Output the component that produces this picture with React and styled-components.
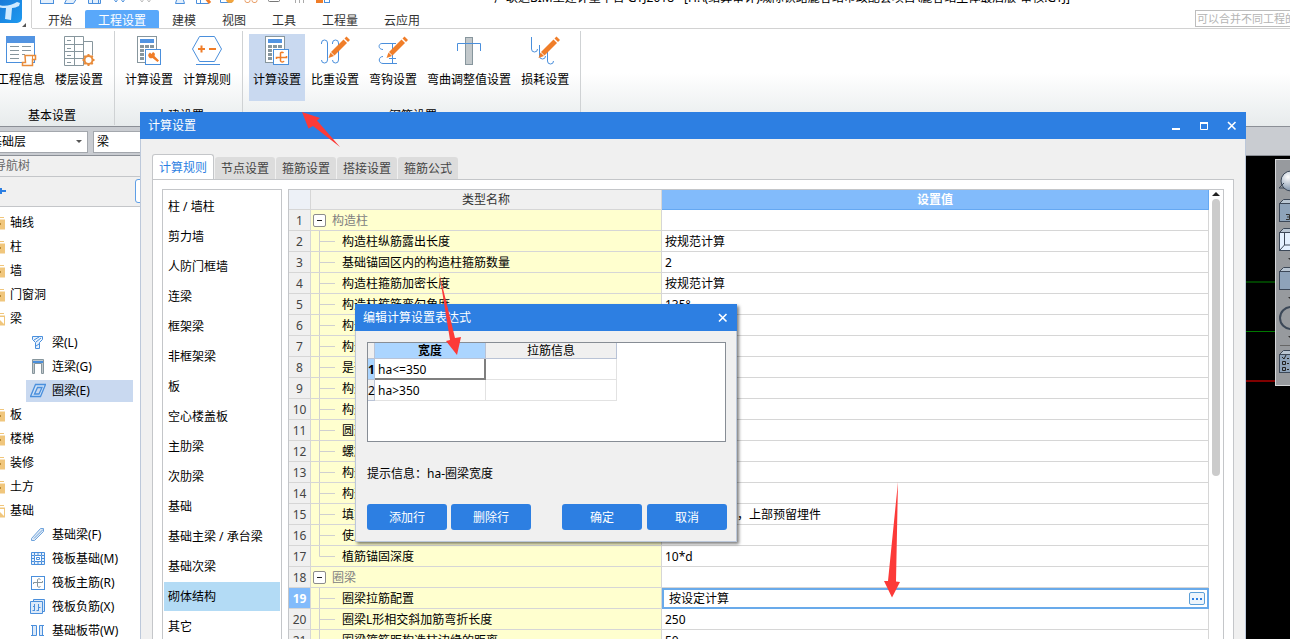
import React from 'react';
import styled, { createGlobalStyle, css } from 'styled-components';

const BLUE = '#2d7fe2';
const LINE = '#c4c6c9';
const ICON_BLUE = '#4a8fdc';
const ORANGE = '#f07d28';
const GRAY = '#87969d';

const GlobalStyle = createGlobalStyle`
  * { box-sizing: border-box; }
  html, body { margin: 0; height: 100%; overflow: hidden; }
  body, button, input, select {
    font-family: "Noto Sans", "Noto Sans CJK SC", sans-serif;
    font-size: 12px;
    line-height: 18px;
    color: #000;
  }
  button { border: 0; padding: 0; background: none; white-space: nowrap; }
  ul { list-style: none; margin: 0; padding: 0; }
  svg { display: block; flex: none; }
  table { border-collapse: separate; border-spacing: 0; table-layout: fixed; }
`;

/* ---------- main window ---------- */

const Desktop = styled.div`
  position: relative;
  height: 100vh;
  overflow: hidden;
  background: #fff;
`;

const Shell = styled.div`
  display: flex;
  flex-direction: column;
  height: calc(100% + 14px);
  margin: -14px 0 0 -16px;
`;

const Header = styled.header`
  display: flex;
`;

const AppMenu = styled.button`
  display: flex;
  align-items: flex-end;
  width: 48px;
  height: 42px;
  border-right: 1px solid #d2d2d2;
`;

const HeaderMain = styled.div`
  flex: 1;
  min-width: 0;
`;

const TitleBar = styled.div`
  display: flex;
  height: 24px;
  padding: 2px 58px 0 8px;
`;

const QuickTools = styled.div`
  display: flex;
  gap: 8px;
`;

const WindowTitle = styled.h1`
  flex: 1;
  margin: 0;
  font-size: 12px;
  font-weight: 400;
  line-height: 20px;
  text-align: center;
  white-space: nowrap;
`;

const MenuRow = styled.nav`
  display: flex;
  height: 19px;
  padding-left: 3px;
  border-bottom: 1px solid #d2d2d2;
`;

const MenuTab = styled.button`
  height: 18px;
  padding: 2px 13px 0;
  color: ${(p) => (p.$active ? '#fff' : '#333')};
  background: ${(p) => (p.$active ? '#59a8fa' : 'transparent')};
  border-radius: 2px 2px 0 0;
`;

const HelpSearch = styled.input`
  width: 120px;
  height: 17px;
  margin: 0 -25px 0 auto;
  padding: 0 1px;
  border: 1px solid #bdbdbd;
  border-radius: 0;
  font-size: 11px;
  &::placeholder { color: #b4b4b4; opacity: 1; }
`;

const Ribbon = styled.div`
  display: flex;
  height: 98px;
  padding: 2px 0 1px 3px;
  background: linear-gradient(#fff 45%, #e7ebec);
  border-bottom: 1px solid #8b8f96;
`;

const RibbonGroup = styled.section`
  display: flex;
  flex-direction: column;
  justify-content: space-between;
  padding: 3px 7px 0 6px;
  border-right: 1px solid #cfd2d4;
`;

const RibbonButtons = styled.div`
  display: flex;
  gap: 2px;
`;

const RibbonButton = styled.button`
  display: flex;
  flex-direction: column;
  align-items: center;
  gap: 4px;
  height: 67px;
  padding: 1px 4px;
  background: ${(p) => (p.$active ? '#c9d9f0' : 'transparent')};
`;

const RibbonLabel = styled.div`
  padding-left: 4px;
  text-align: center;
`;

const ComboBar = styled.div`
  display: flex;
  gap: 5px;
  height: 29px;
  padding: 4px 2px 2px;
  background: #c9ccd1;
  border-bottom: 1px solid #8b8f96;
`;

const ComboBox = styled.div`
  display: flex;
  align-items: center;
  width: 102px;
  height: 22px;
  padding-right: 4px;
  background: #fff;
  border: 1px solid #a3a7ad;
`;

const ComboSelect = styled.select`
  flex: 1;
  height: 20px;
  padding: 0 3px;
  appearance: none;
  border: 0;
  background: none;
`;

const Workspace = styled.div`
  display: flex;
  flex: 1;
  min-height: 0;
  background: #000;
`;

const NavPanel = styled.aside`
  width: 280px;
  background: #fff;
`;

const NavTitle = styled.h2`
  height: 21px;
  margin: 0;
  padding: 0 10px;
  font-size: 12px;
  font-weight: 400;
  line-height: 20px;
  color: #666;
  background: #f0f0f0;
  border-bottom: 1px solid ${LINE};
`;

const NavTools = styled.div`
  display: flex;
  align-items: center;
  justify-content: space-between;
  height: 30px;
  padding: 0 6px 2px 10px;
  background: #f0f0f0;
  border-bottom: 1px solid ${LINE};
`;

const NavSearch = styled.input`
  width: 123px;
  height: 24px;
  border: 1px solid #5f9fe6;
  border-radius: 3px;
`;

const NavList = styled.ul`
  padding-top: 4px;
`;

const FolderRow = styled.button`
  display: flex;
  align-items: center;
  gap: 5px;
  height: 24px;
  padding-left: 7px;
`;

const LeafItem = styled.li`
  padding: 1px 0 1px 42px;
`;

const LeafRow = styled.button`
  display: flex;
  align-items: center;
  gap: 6px;
  width: 107px;
  height: 22px;
  padding-left: 4px;
  background: ${(p) => (p.$active ? '#c9d9f0' : 'transparent')};
`;

const Canvas = styled.main`
  display: flex;
  justify-content: flex-end;
  flex: 1;
  align-items: flex-start;
  min-width: 0;
  padding-top: 3px;
  overflow: hidden;
  background:
    linear-gradient(#004000, #004000) 0 125px / 100% 2px no-repeat,
    linear-gradient(#007800, #007800) 0 175px / 100% 1px no-repeat,
    linear-gradient(#800000, #800000) 0 224px / 100% 2px no-repeat,
    #000;
`;

const ViewTools = styled.div`
  width: 15px;
  height: 227px;
  overflow: hidden;
  background: #979a9e;
  border: solid #d5d7d9;
  border-width: 1px 0 1px 1px;
`;

/* ---------- dialogs ---------- */

const dialogBase = css`
  position: absolute;
  display: flex;
  flex-direction: column;
  background: #f0f0f0;
`;

const SettingsDialog = styled.section`
  ${dialogBase}
  top: 112px;
  left: 140px;
  right: 44px;
  bottom: -40px;
`;

const ExpressionDialog = styled.section`
  ${dialogBase}
  top: 304px;
  left: 355px;
  width: 382px;
  box-shadow: 2px 2px 3px rgba(0, 0, 0, 0.5);
`;

const DialogTitle = styled.div`
  display: flex;
  align-items: center;
  justify-content: space-between;
  height: 27px;
  padding: 0 9px 0 8px;
  color: #fff;
  background: ${BLUE};
`;

const WindowButtons = styled.div`
  display: flex;
  gap: 18px;
`;

const DialogBody = styled.div`
  display: flex;
  flex-direction: column;
  flex: 1;
  min-height: 0;
  padding: ${(p) => p.$padding};
  border: 1px solid #bcc8da;
  border-top: 0;
`;

const TabStrip = styled.div`
  display: flex;
  align-items: flex-end;
  gap: 1px;
`;

const Tab = styled.button`
  height: 22px;
  padding: 2px 6px 0;
  color: #444;
  background: #dcdcdc;
  border-radius: 3px 3px 0 0;
  ${(p) => p.$active && css`
    height: 26px;
    margin-bottom: -1px;
    padding-top: 0;
    color: ${BLUE};
    background: #fff;
    border: 1px solid ${LINE};
    border-bottom: 0;
  `}
`;

const TabPanel = styled.div`
  display: flex;
  gap: 6px;
  flex: 1;
  min-height: 0;
  padding: 9px;
  background: #fff;
  border: 1px solid ${LINE};
`;

const CategoryList = styled.ul`
  flex: none;
  width: 120px;
  padding: 2px 1px;
  border: 1px solid ${LINE};
`;

const Category = styled.button`
  display: block;
  width: 100%;
  height: 29px;
  margin-bottom: 1px;
  padding: 1px 0 0 4px;
  text-align: left;
  background: ${(p) => (p.$active ? '#b3dbf5' : 'transparent')};
`;

const GridFrame = styled.div`
  display: flex;
  flex: 1;
  min-width: 0;
  overflow: hidden;
  border: 1px solid ${LINE};
`;

const GridScroll = styled.div`
  flex: 1;
  min-width: 0;
  overflow: hidden;
`;

const Grid = styled.table`
  width: 100%;
  th, td {
    height: 21px;
    padding: 2px 0 0;
    border: solid #d6d6d6;
    border-width: 0 1px 1px 0;
    font-weight: 400;
    line-height: 18px;
    text-align: left;
    white-space: nowrap;
    overflow: hidden;
  }
  thead th {
    height: 20px;
    padding-top: 1px;
    color: #333;
    text-align: center;
    background: #f0f0f0;
  }
  tbody th {
    color: #444;
    text-align: center;
    background: #f0f0f0;
  }
`;

const CornerHead = styled.th`
  &&& { background: #edf1f7; }
`;

const ValueHead = styled.th`
  &&& {
    color: #fff;
    font-weight: 700;
    background: #82bbfb;
    border-color: #65a8f2;
  }
`;

const RowNumber = styled.th`
  ${(p) => p.$active && css`
    &&& {
      color: #fff;
      font-weight: 700;
      background: #82bbfb;
    }
  `}
`;

const NameCell = styled.td`
  &&& {
    padding: 0;
    background: #ffffcf;
  }
`;

const NameFlow = styled.div`
  display: flex;
  align-items: center;
  gap: 6px;
  height: 20px;
  padding-left: ${(p) => (p.$group ? '2px' : '8px')};
  color: ${(p) => (p.$group ? '#808080' : '#000')};
`;

const NameText = styled.span`
  padding-top: 2px;
`;

const Toggle = styled.button`
  display: flex;
  align-items: center;
  justify-content: center;
  width: 13px;
  height: 13px;
  background: #fff;
  border: 1px solid #8c8c8c;
  border-radius: 2px;
`;

const ValueCell = styled.td`
  &&& { padding-left: 3px; }
`;

const EditCell = styled.td`
  &&& { padding: 0; border: 0; }
`;

const EditBox = styled.div`
  display: flex;
  align-items: center;
  height: 21px;
  padding-right: 2px;
  border: 2px solid #69aaea;
`;

const EditInput = styled.input`
  flex: 1;
  min-width: 0;
  height: 17px;
  padding: 1px 5px 0;
  border: 0;
  outline: 0;
  background: transparent;
`;

const MoreButton = styled.button`
  display: flex;
  align-items: center;
  justify-content: center;
  width: 16px;
  height: 13px;
  background: #edf5fc;
  border: 1px solid #5c9fd8;
  border-radius: 2px;
`;

const ScrollTrack = styled.div`
  display: flex;
  flex-direction: column;
  align-items: center;
  gap: 3px;
  width: 14px;
  padding-top: 2px;
`;

const ScrollThumb = styled.div`
  width: 8px;
  height: 277px;
  border-radius: 4px;
  background: #cbcbcb;
`;

const ExprFrame = styled.div`
  height: 100px;
  margin-right: 1px;
  border: 1px solid #878d95;
  background: #fff;
`;

const ExprTable = styled.table`
  width: 249px;
  th, td {
    height: 21px;
    padding: 0;
    border: solid #e2e2e2;
    border-width: 0 1px 1px 0;
    font-weight: 400;
    line-height: 16px;
    text-align: left;
  }
  th {
    background: #f0f0f0;
    border-color: #b9c3d6;
  }
  thead th {
    height: 16px;
    line-height: 15px;
    text-align: center;
  }
  tbody th { padding-top: 2px; }
  td { padding: 2px 0 0 3px; }
`;

const ExprHead = styled.th`
  ${(p) => p.$active && css`
    &&& { font-weight: 700; background: #abd5ff; }
  `}
`;

const ExprCell = styled.td`
  ${(p) => p.$active && css`
    &&& {
      border: solid #7f7f7f;
      border-width: 0 2px 2px 0;
    }
  `}
`;

const Hint = styled.p`
  margin: 23px 0 21px;
`;

const ButtonRow = styled.div`
  display: flex;
  justify-content: space-between;
`;

const ButtonPair = styled.div`
  display: flex;
  gap: ${(p) => p.$gap};
`;

const ActionButton = styled.button`
  width: 80px;
  height: 26px;
  padding-top: 2px;
  color: #fff;
  background: ${BLUE};
  border-radius: 3px;
`;

const Marks = styled.svg`
  position: absolute;
  top: 0;
  left: 0;
  pointer-events: none;
`;

/* ---------- drawings ---------- */

const Svg = ({ size = 32, width, height, children }) => (
  <svg width={width || size} height={height || size} viewBox={`0 0 ${width || size} ${height || size}`} fill="none" aria-hidden="true">
    {children}
  </svg>
);

const Pencil = () => (
  <g>
    <path d="M9.500 23l2-5.500 3.500 3.500z" fill={ORANGE} />
    <path d="M12 17L24.500 4.500l3.500 3.500L15.500 20.500z" fill={ORANGE} />
    <path d="M25.500 3.500l2-2 3.500 3.500-2 2z" fill={ORANGE} />
  </g>
);

const Calculator = ({ children }) => (
  <Svg>
    <rect x="4.500" y="1.500" width="19" height="26" fill="#fff" stroke={GRAY} />
    <rect x="7" y="4" width="14" height="4" fill="#5294e2" />
    {[10, 14, 18, 22].map((y) => [7, 12, 17].map((x) => (
      <rect key={`${x}-${y}`} x={x} y={y} width="4" height="3" fill={GRAY} />
    )))}
    <rect x="12.500" y="14.500" width="15" height="15" fill="#fff" stroke={ICON_BLUE} />
    {children}
  </Svg>
);

const icons = {
  info: (
    <Svg>
      <rect x="1.500" y="1.500" width="28" height="26" fill="#fff" stroke={ICON_BLUE} />
      <rect x="1" y="1" width="29" height="7" fill="#5294e2" />
      <path d="M5 11.500h9M5 15.500h9M5 19.500h9M5 23.500h9M17 11.500h9M17 15.500h9M17 19.500h3" stroke={GRAY} />
      <path d="M20 20.500h10.500v4h-3v6h-10v-3h3z" fill="#fff" stroke="#e88b3a" strokeWidth="1.500" />
      <path d="M27.500 24.500v-3.500" stroke="#e88b3a" />
    </Svg>
  ),
  floors: (
    <Svg>
      <path d="M1.500 1.500h19v29h-19zM1.500 9.500h19M1.500 16.500h19M1.500 23.500h19M11.500 1.500v29M20.500 6.500h9v14" stroke={GRAY} />
      <path d="M4 5.500h4M4 13.500h4M4 20.500h4M4 27.500h4" stroke={GRAY} />
      <circle cx="25.500" cy="25" r="5" fill="#e88b3a" />
      <path d="M25.500 19v12M19.500 25h12M21.300 20.800l8.400 8.400M29.700 20.800l-8.400 8.400" stroke="#e88b3a" strokeWidth="2" />
      <circle cx="25.500" cy="25" r="3" fill="#fff" />
    </Svg>
  ),
  calcWrench: (
    <Calculator>
      <path d="M17 17.500l1.500 1.500 1.500-2a3 3 0 0 1 1.500 4l4.500 4.500-1.500 1.500-5-4a3 3 0 0 1-4-4z" fill={ORANGE} />
    </Calculator>
  ),
  calcHook: (
    <Calculator>
      <path d="M15.500 24v-1.500h10V21M22.500 18a2 2 0 0 0-3 0v8a2 2 0 0 0 3.500 0" stroke={ORANGE} strokeWidth="1.500" />
    </Calculator>
  ),
  rules: (
    <Svg>
      <path d="M8.500 1.500h15l7 12.500-7 12.500h-15l-7-12.500z" fill="#fff" stroke={ICON_BLUE} />
      <path d="M5 29.500h24" stroke={ICON_BLUE} />
      <path d="M7 14h7M10.500 10.500v7M18 14h7" stroke={ORANGE} strokeWidth="2" />
    </Svg>
  ),
  weight: (
    <Svg>
      <path d="M2.500 9V8a3 3 0 0 1 6 0v17a3 3 0 0 1-6 0M13.500 9V8a3 3 0 0 1 6 0v17a3 3 0 0 1-6 0" stroke={ICON_BLUE} />
      <Pencil />
    </Svg>
  ),
  hook: (
    <Svg>
      <path d="M6 14.500C1 14.500 1 8.500 5 8.500h14M15.500 8v20M6 21.500c-5 0-5 7 0 7h14M12 23.500h7" stroke={ICON_BLUE} />
      <Pencil />
    </Svg>
  ),
  bend: (
    <Svg>
      <rect x="12.500" y="2.500" width="7" height="27" fill="#c2c8cb" stroke={GRAY} />
      <path d="M4.500 16V8.500h23V16" stroke={ICON_BLUE} />
    </Svg>
  ),
  loss: (
    <Svg>
      <path d="M2.500 2v12a3 3 0 0 0 6 0M10.500 10v11a3 3 0 0 0 6 0M18.500 17v9a3 3 0 0 0 6 0" stroke={ICON_BLUE} />
      <Pencil />
    </Svg>
  ),
};

const Caret = ({ up }) => (
  <Svg width={8} height={4}>
    <path d={up ? 'M0 4l4-4 4 4z' : 'M1 0h6L4 3z'} fill={up ? '#222' : '#555'} />
  </Svg>
);

const Folder = ({ open }) => (
  <Svg size={14}>
    <path d="M1 1.500h12M1 4h13v9H1z" fill="#f0c67c" stroke="#f0c67c" />
    {open ? <path d="M6 5h7v7z" fill="#fff" /> : <rect x="8" y="7" width="2" height="2" fill="#b98a35" />}
  </Svg>
);

const leafIcons = {
  beam: <path d="M2.500 1.500h10v3l-3 3v6h-4v-6l-3-3zM4 5l5-3M6 7l5-4M6 11l3-2" stroke={ICON_BLUE} fill="#eaf3fd" />,
  lintel: (
    <g>
      <path d="M2.500 .5h11v14h-2v-10h-7v10h-2z" fill="#c2c8cb" stroke={GRAY} />
      <path d="M3 3h10" stroke={ICON_BLUE} strokeWidth="2" />
    </g>
  ),
  ring: <path d="M5.500 1.500h10l-5 12h-10zM7.500 4.500h4.500l-3 6.500H4.500z" stroke={ICON_BLUE} fill="#cfe2f8" fillRule="evenodd" strokeWidth="1.300" />,
  footBeam: <path d="M1.500 11.500l9-10h3v3l-9 9h-3zM4 11.500l9-9" stroke="#6ea3dc" fill="#dfeaf6" />,
  raft: (
    <g stroke={ICON_BLUE}>
      <path d="M1.500 1.500h13v12h-13z" fill="#e6f0fb" />
      <path d="M4.500 4.500h7v6h-7z" fill="#fff" />
      <path d="M6.500 6.500h3v2h-3z" />
      <path d="M4.500 1v3M8 1v3M11.500 1v3M4.500 11v3M8 11v3M11.500 11v3M1 4.500h3M1 7.500h3M1 10.500h3M12 4.500h3M12 7.500h3M12 10.500h3" />
    </g>
  ),
  mainBar: (
    <g>
      <rect x="1.500" y="1.500" width="13" height="13" fill="#fff" stroke={ICON_BLUE} />
      <path d="M3.500 9V7.500h9V6M10.500 4.500a2 2 0 0 0-3 0v7a2 2 0 0 0 3 0" stroke={GRAY} />
    </g>
  ),
  negBar: <path d="M3.500 3V.5h11v12H13M.5 2.500h12v12H.5zM4.500 5v7M8.500 5v7M4 7.500h-1M4.500 11.500h-2M8.500 8.500h2M8.500 11.500h-2" stroke={ICON_BLUE} fill="#dce9f8" />,
  strip: (
    <g>
      <path d="M2 2h4v11H2zM9 2h4v11H9z" fill="#dce9f8" />
      <path d="M1 2.500h5.500v10H1M14 2.500H9.500v10H14M2.500 2v11M12.500 2v11" stroke={ICON_BLUE} />
    </g>
  ),
};

/* ---------- data ---------- */

const menuTabs = ['开始', '工程设置', '建模', '视图', '工具', '工程量', '云应用'];

const ribbonGroups = [
  { label: '基本设置', items: [['工程信息', 'info'], ['楼层设置', 'floors']] },
  { label: '土建设置', items: [['计算设置', 'calcWrench'], ['计算规则', 'rules']] },
  {
    label: '钢筋设置',
    active: '计算设置',
    items: [['计算设置', 'calcHook'], ['比重设置', 'weight'], ['弯钩设置', 'hook'], ['弯曲调整值设置', 'bend'], ['损耗设置', 'loss']],
  },
];

const navTree = [
  { name: '轴线' }, { name: '柱' }, { name: '墙' }, { name: '门窗洞' },
  { name: '梁', children: [['梁(L)', 'beam'], ['连梁(G)', 'lintel'], ['圈梁(E)', 'ring']] },
  { name: '板' }, { name: '楼梯' }, { name: '装修' }, { name: '土方' },
  {
    name: '基础',
    children: [['基础梁(F)', 'footBeam'], ['筏板基础(M)', 'raft'], ['筏板主筋(R)', 'mainBar'], ['筏板负筋(X)', 'negBar'], ['基础板带(W)', 'strip']],
  },
];

const dialogTabs = ['计算规则', '节点设置', '箍筋设置', '搭接设置', '箍筋公式'];

const categories = [
  '柱 / 墙柱', '剪力墙', '人防门框墙', '连梁', '框架梁', '非框架梁', '板', '空心楼盖板',
  '主肋梁', '次肋梁', '基础', '基础主梁 / 承台梁', '基础次梁', '砌体结构', '其它',
];

const rules = [
  { name: '构造柱', group: true },
  { name: '构造柱纵筋露出长度', value: '按规范计算' },
  { name: '基础锚固区内的构造柱箍筋数量', value: '2' },
  { name: '构造柱箍筋加密长度', value: '按规范计算' },
  { name: '构造柱箍筋弯勾角度', value: '135°' },
  { name: '构造柱纵筋搭接错开百分率', value: '50%' },
  { name: '构造柱箍筋根数计算方式', value: '向上取整+1' },
  { name: '是否属于砖混结构', value: '否' },
  { name: '构造柱顶部锚固长度', value: '按规范计算' },
  { name: '构造柱底部锚固长度', value: '按规范计算' },
  { name: '圆形箍筋的搭接长度', value: '' },
  { name: '螺旋箍筋是否连续通过', value: '是' },
  { name: '构造柱与圈梁相交做法', value: '' },
  { name: '构造柱纵筋弯折长度', value: '' },
  { name: '填充墙构造柱做法', value: '下部预留钢筋，上部预留埋件' },
  { name: '使用预埋件时的锚固', value: '' },
  { name: '植筋锚固深度', value: '10*d', last: true },
  { name: '圈梁', group: true },
  { name: '圈梁拉筋配置', value: '按设定计算', editing: true },
  { name: '圈梁L形相交斜加筋弯折长度', value: '250' },
  { name: '圈梁箍筋距构造柱边缘的距离', value: '50' },
  { name: '圈梁箍筋弯勾角度', value: '135°' },
];

/* ---------- parts ---------- */

const Branch = ({ last }) => (
  <svg width="17" height="20" viewBox="0 0 17 20" aria-hidden="true">
    <path d={last ? 'M.5 0v10.500H16' : 'M.5 0v20M.5 10.500H16'} stroke="#d0d0d0" fill="none" />
  </svg>
);

const RuleRow = ({ rule, index }) => (
  <tr>
    <RowNumber scope="row" $active={rule.editing}>{index + 1}</RowNumber>
    <NameCell>
      <NameFlow $group={rule.group}>
        {rule.group
          ? <Toggle aria-label={`折叠${rule.name}`}><Svg width={5} height={1}><path d="M0 .5h5" stroke="#222" /></Svg></Toggle>
          : <Branch last={rule.last} />}
        <NameText>{rule.name}</NameText>
      </NameFlow>
    </NameCell>
    {rule.editing ? (
      <EditCell>
        <EditBox>
          <EditInput aria-label={rule.name} defaultValue={rule.value} />
          <MoreButton aria-label="编辑表达式">
            <Svg width={10} height={2}><path d="M0 1h2M4 1h2M8 1h2" stroke={BLUE} strokeWidth="2" /></Svg>
          </MoreButton>
        </EditBox>
      </EditCell>
    ) : <ValueCell>{rule.value}</ValueCell>}
  </tr>
);

const CloseIcon = () => (
  <Svg size={10}><path d="M1 1l7.500 7.500M8.500 1L1 8.500" stroke="#fff" strokeWidth="1.600" /></Svg>
);

const QuickIcons = () => (
  <QuickTools>
    <Svg size={16}><rect x=".5" y="1.500" width="13" height="14" stroke={ICON_BLUE} fill="#e3effc" /></Svg>
    <Svg size={16}><path d="M.5 15.500l4-8h10l-5 8z" stroke={ICON_BLUE} fill="#e3effc" /></Svg>
    <Svg size={16}><path d="M.5 1.500h12v14H.500zM4.500 15v-4h6v4" stroke={ICON_BLUE} fill="#e3effc" /></Svg>
    <Svg size={16}><path d="M1 10l3 4 2-3M8 10l3 4 2-3" stroke={ICON_BLUE} /></Svg>
    <Svg width={28} height={16}><path d="M3 10l3 4 2-3M10 10l3 4 2-3" stroke="#bbb" /></Svg>
    <Svg size={16}><path d="M3.500 15.500l3-10h3l3 10z" stroke={ICON_BLUE} fill="#e3effc" /></Svg>
    <Svg size={16}><path d="M.5 1.500h12v14H.500zM4.500 1v14M1 11.500h11" stroke={ICON_BLUE} /><path d="M9 9l5 6" stroke={ORANGE} strokeWidth="3" /></Svg>
    <Svg size={16}><path d="M.5 1.500h11v13H.500z" stroke={ICON_BLUE} /><circle cx="10" cy="11" r="4" fill="#f3a53c" /></Svg>
    <Svg size={16}><rect x="1" y="9.500" width="5" height="5" rx="2" stroke="#e9a06a" /><rect x="8" y="9.500" width="5" height="5" rx="2" stroke="#e9a06a" /></Svg>
    <Svg size={16}><rect x=".5" y="4.500" width="11" height="9" rx="1" stroke="#777" /></Svg>
    <Svg size={16}><path d="M0 11.500h14M3.500 2v13M7.500 2v13M11.500 2v13" stroke="#aaa" /></Svg>
    <Svg size={16}><rect x="0" y="10" width="7" height="5" fill={ORANGE} /><rect x="8.500" y="8.500" width="5" height="6" stroke={ICON_BLUE} /></Svg>
  </QuickTools>
);

const CubeIcon = ({ y, fill = '#8ea3ba' }) => (
  <g stroke="#3c4858">
    <path d={`M3.500 ${y + 4.5}l4-4h16v4z`} fill="#b9c6d3" />
    <rect x="3.500" y={y + 4.5} width="20" height="18" fill={fill} />
  </g>
);

export default function App() {
  return (
    <Desktop>
      <GlobalStyle />
      <Shell>
        <Header>
          <AppMenu aria-label="应用菜单">
            <Svg width={46} height={42}>
              <defs>
                <linearGradient id="logo" x1="0" y1="0" x2="1" y2="1">
                  <stop offset="0" stopColor="#1465c8" />
                  <stop offset="1" stopColor="#1e9af0" />
                </linearGradient>
              </defs>
              <rect x="2" y="-2" width="36" height="39" rx="5" fill="url(#logo)" />
              <path d="M15 19c6 2 13 0 18-3l3 1-1 3c-3 1-4 2-7 2l-1 12-6-1 1-11c-3 0-5 0-7-1z" fill="#cfeaff" />
              <path d="M42 37v4h-4z" fill="#555" />
            </Svg>
          </AppMenu>
          <HeaderMain>
            <TitleBar>
              <QuickIcons />
              <WindowTitle>广联达BIM土建计量平台 GTJ2018 - [H:\(结算审计)城际铁路麓谷站市政配套项目\麓谷站主体最后版-审核.GTJ]</WindowTitle>
            </TitleBar>
            <MenuRow>
              {menuTabs.map((t) => <MenuTab key={t} $active={t === '工程设置'}>{t}</MenuTab>)}
              <HelpSearch aria-label="搜索" placeholder="可以合并不同工程的" />
            </MenuRow>
          </HeaderMain>
        </Header>

        <Ribbon>
          {ribbonGroups.map((g) => (
            <RibbonGroup key={g.label}>
              <RibbonButtons>
                {g.items.map(([label, icon]) => (
                  <RibbonButton key={label} $active={g.active === label}>
                    {icons[icon]}
                    {label}
                  </RibbonButton>
                ))}
              </RibbonButtons>
              <RibbonLabel>{g.label}</RibbonLabel>
            </RibbonGroup>
          ))}
        </Ribbon>

        <ComboBar>
          <ComboBox>
            <ComboSelect aria-label="楼层"><option>基础层</option></ComboSelect>
            <Caret />
          </ComboBox>
          <ComboBox>
            <ComboSelect aria-label="构件类型"><option>梁</option></ComboSelect>
            <Caret />
          </ComboBox>
        </ComboBar>

        <Workspace>
          <NavPanel>
            <NavTitle>导航树</NavTitle>
            <NavTools>
              <Svg size={12}><path d="M7 3v6M2 6h10" stroke={BLUE} strokeWidth="2" /></Svg>
              <NavSearch aria-label="查找构件" />
            </NavTools>
            <NavList>
              {navTree.map((node) => (
                <li key={node.name}>
                  <FolderRow><Folder open={!!node.children} />{node.name}</FolderRow>
                  {node.children && (
                    <ul>
                      {node.children.map(([label, icon]) => (
                        <LeafItem key={label}>
                          <LeafRow $active={label === '圈梁(E)'}>
                            <Svg size={16}>{leafIcons[icon]}</Svg>
                            {label}
                          </LeafRow>
                        </LeafItem>
                      ))}
                    </ul>
                  )}
                </li>
              ))}
            </NavList>
          </NavPanel>
          <Canvas>
            <ViewTools>
              <Svg width={28} height={225}>
                <defs>
                  <radialGradient id="orb" cx=".35" cy=".3" r=".7">
                    <stop offset="0" stopColor="#fff" />
                    <stop offset="1" stopColor="#7f93aa" />
                  </radialGradient>
                </defs>
                <circle cx="15" cy="21" r="10" fill="url(#orb)" stroke="#3c4858" />
                <path d="M3 28l5-5M3 28h5" stroke="#3c4858" />
                <CubeIcon y={39} />
                <path d="M10 54.500h3.500v5H10M11 57h2.500" stroke="#333" />
                <CubeIcon y={68} fill="#e4f1ff" />
                <path d="M8.500 73v12h14M4 90l4.500-5" stroke="#3c4858" />
                <CubeIcon y={107} />
                <circle cx="15" cy="158" r="11" stroke="#3c4858" strokeWidth="2" />
                <path d="M12 98h6l-3 3zM12 137h6l-3 3zM12 176h6l-3 3z" fill="#333" />
                <path d="M4 185.500h20" stroke="#666" />
                <CubeIcon y={190} />
                <path d="M6 197l2 2 2-4M6.500 201.500h3v3h-3zM6.500 207.500h3v3h-3zM11 198.500h2M11 203.500h2M11 209.500h2" stroke="#222" />
              </Svg>
            </ViewTools>
          </Canvas>
        </Workspace>
      </Shell>

      <SettingsDialog role="dialog" aria-label="计算设置">
        <DialogTitle>
          计算设置
          <WindowButtons>
            <button aria-label="最小化"><Svg size={10}><path d="M1 8h8" stroke="#fff" strokeWidth="2" /></Svg></button>
            <button aria-label="最大化"><Svg size={10}><path d="M1.500 2.500h7v6h-7z" stroke="#fff" /><path d="M1 2h8" stroke="#fff" strokeWidth="2" /></Svg></button>
            <button aria-label="关闭"><CloseIcon /></button>
          </WindowButtons>
        </DialogTitle>
        <DialogBody $padding="15px 11px 12px">
          <TabStrip>
            {dialogTabs.map((t, i) => <Tab key={t} $active={i === 0}>{t}</Tab>)}
          </TabStrip>
          <TabPanel>
            <CategoryList>
              {categories.map((c) => <li key={c}><Category $active={c === '砌体结构'}>{c}</Category></li>)}
            </CategoryList>
            <GridFrame>
              <GridScroll>
                <Grid>
                  <colgroup>
                    <col style={{ width: 22 }} />
                    <col style={{ width: 351 }} />
                    <col />
                  </colgroup>
                  <thead>
                    <tr>
                      <CornerHead aria-label="序号" />
                      <th scope="col">类型名称</th>
                      <ValueHead scope="col">设置值</ValueHead>
                    </tr>
                  </thead>
                  <tbody>
                    {rules.map((r, i) => <RuleRow key={i} rule={r} index={i} />)}
                  </tbody>
                </Grid>
              </GridScroll>
              <ScrollTrack>
                <Caret up />
                <ScrollThumb />
              </ScrollTrack>
            </GridFrame>
          </TabPanel>
        </DialogBody>
      </SettingsDialog>

      <ExpressionDialog role="dialog" aria-label="编辑计算设置表达式">
        <DialogTitle>
          编辑计算设置表达式
          <button aria-label="关闭"><CloseIcon /></button>
        </DialogTitle>
        <DialogBody $padding="11px 9px 11px 11px">
          <ExprFrame>
            <ExprTable>
              <colgroup>
                <col style={{ width: 7 }} />
                <col style={{ width: 111 }} />
                <col />
              </colgroup>
              <thead>
                <tr>
                  <ExprHead aria-label="序号" />
                  <ExprHead scope="col" $active>宽度</ExprHead>
                  <ExprHead scope="col">拉筋信息</ExprHead>
                </tr>
              </thead>
              <tbody>
                {['ha<=350', 'ha>350'].map((v, i) => (
                  <tr key={v}>
                    <ExprHead scope="row" $active={i === 0}>{i + 1}</ExprHead>
                    <ExprCell $active={i === 0}>{v}</ExprCell>
                    <ExprCell />
                  </tr>
                ))}
              </tbody>
            </ExprTable>
          </ExprFrame>
          <Hint>提示信息：ha-圈梁宽度</Hint>
          <ButtonRow>
            <ButtonPair $gap="4px">
              <ActionButton>添加行</ActionButton>
              <ActionButton>删除行</ActionButton>
            </ButtonPair>
            <ButtonPair $gap="5px">
              <ActionButton>确定</ActionButton>
              <ActionButton>取消</ActionButton>
            </ButtonPair>
          </ButtonRow>
        </DialogBody>
      </ExpressionDialog>

      <Marks width="920" height="620" viewBox="0 0 920 620" fill="#fc3a38" aria-hidden="true">
        <path d="M302 112l18 6-3 2.500L340 147l-27-21-4.500 2.500z" />
        <path d="M439 272l16 66 6-1-4 18-11-14 4-1z" />
        <path d="M898 482l-2 99.500 4 .5-8 15.500-8-16.500h4z" />
      </Marks>
    </Desktop>
  );
}
